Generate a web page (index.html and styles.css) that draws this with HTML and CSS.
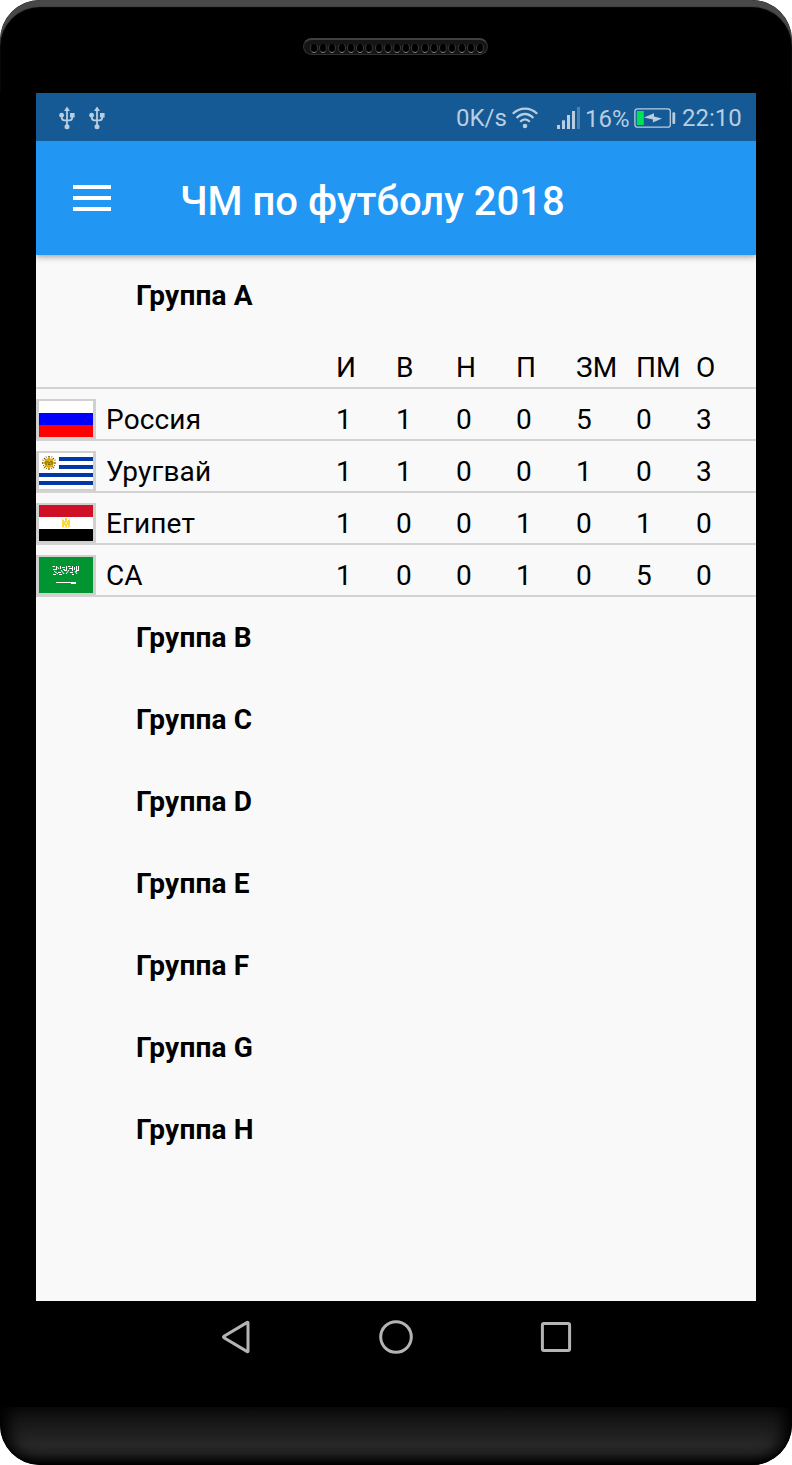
FILE: index.html
```html
<!DOCTYPE html>
<html lang="ru">
<head>
    <meta charset="UTF-8">
    <meta name="viewport" content="width=device-width, initial-scale=1.0">
    <title>ЧМ по футболу 2018</title>
    <link rel="stylesheet" href="styles.css">
</head>
<body>
    <div class="phone">
        <div class="phone-top">
            <div class="speaker">
                <i></i><i></i><i></i><i></i><i></i><i></i><i></i><i></i><i></i><i></i><i></i><i></i><i></i><i></i><i></i><i></i><i></i><i></i><i></i>
            </div>
        </div>

        <div class="screen">
            <div class="status-bar">
                <svg class="usb" width="16" height="24" viewBox="0 0 16 24">
                    <path d="M8 3V21M2.7 8.5V11Q2.7 14.3 5.5 14.3H10.5Q13.3 14.3 13.3 11V8" fill="none" stroke="currentColor" stroke-width="1.8"/>
                    <path d="M8 0.6L11 5H5Z" fill="currentColor"/>
                    <circle cx="2.6" cy="9.2" r="2.4" fill="currentColor"/>
                    <rect x="11" y="7" width="4.6" height="4.6" rx=".5" fill="currentColor"/>
                    <circle cx="8" cy="20.8" r="2.5" fill="currentColor"/>
                </svg>
                <svg class="usb" width="16" height="24" viewBox="0 0 16 24">
                    <path d="M8 3V21M2.7 8.5V11Q2.7 14.3 5.5 14.3H10.5Q13.3 14.3 13.3 11V8" fill="none" stroke="currentColor" stroke-width="1.8"/>
                    <path d="M8 0.6L11 5H5Z" fill="currentColor"/>
                    <circle cx="2.6" cy="9.2" r="2.4" fill="currentColor"/>
                    <rect x="11" y="7" width="4.6" height="4.6" rx=".5" fill="currentColor"/>
                    <circle cx="8" cy="20.8" r="2.5" fill="currentColor"/>
                </svg>
                <span class="speed">0K/s</span>
                <svg class="wifi" width="26" height="22" viewBox="0 0 26 22">
                    <g fill="none" stroke="currentColor" stroke-width="2.3">
                        <path d="M0.8 6.8Q6 1.6 13 1.6T25.2 6.8"/>
                        <path d="M4.6 11Q8.5 7 13 7T21.4 11"/>
                        <path d="M8.2 14.8Q10.5 12.3 13 12.3T17.8 14.8"/>
                    </g>
                    <circle cx="13" cy="19" r="2.3" fill="currentColor"/>
                </svg>
                <svg class="signal" width="23" height="22" viewBox="0 0 23 22">
                    <g fill="currentColor">
                        <rect x="0" y="18" width="3" height="4"/>
                        <rect x="5" y="13.3" width="3" height="8.7"/>
                        <rect x="10" y="8" width="3" height="14"/>
                        <rect x="15" y="4" width="3" height="18"/>
                        <rect x="20" y="0" width="3" height="22" opacity=".35"/>
                    </g>
                </svg>
                <span class="percent">16%</span>
                <svg class="battery" width="42" height="20" viewBox="0 0 42 20">
                    <rect x="0.9" y="0.8" width="35.4" height="18.4" rx="2.5" fill="none" stroke="currentColor" stroke-width="1.3"/>
                    <rect x="2.8" y="3" width="7" height="14" fill="#00e05a"/>
                    <path d="M10 9.6L20 5.3L20 8.4L28 10.4L18.8 14.6L19 11.4Z" fill="currentColor"/>
                    <rect x="38.4" y="4.2" width="2.8" height="11.8" rx="1" fill="currentColor"/>
                </svg>
                <span class="time">22:10</span>
            </div>

            <div class="toolbar">
                <div class="menu-btn"><span></span><span></span><span></span></div>
                <h1>ЧМ по футболу 2018</h1>
            </div>

            <div class="content">
                <h2 class="group">Группа A</h2>
                <div class="row">
                    <div></div><div></div>
                    <div>И</div><div>В</div><div>Н</div><div>П</div><div>ЗМ</div><div>ПМ</div><div>О</div>
                </div>
                <div class="row">
                    <div class="flag">
                        <svg width="54" height="36" viewBox="0 0 54 36">
                            <rect width="54" height="12" fill="#fff"/>
                            <rect y="12" width="54" height="12" fill="#00f"/>
                            <rect y="24" width="54" height="12" fill="#f00"/>
                        </svg>
                    </div>
                    <div class="team">Россия</div>
                    <div>1</div><div>1</div><div>0</div><div>0</div><div>5</div><div>0</div><div>3</div>
                </div>
                <div class="row">
                    <div class="flag">
                        <svg width="54" height="36" viewBox="0 0 54 36">
                            <rect width="54" height="36" fill="#fff"/>
                            <path d="M20 4H54V8H20ZM20 12H54V16H20ZM0 20H54V24H0ZM0 28H54V32H0Z" fill="#0038a8"/>
                            <path d="M10 3V17M3 10H17M5 5L15 15M15 5L5 15" stroke="#d9a300" stroke-width="1.5"/>
                            <path d="M10 3V17M3 10H17M5 5L15 15M15 5L5 15M7 3.5L13 16.5M13 3.5L7 16.5M3.5 7L16.5 13M16.5 7L3.5 13" stroke="#4a3800" stroke-width="1" stroke-dasharray="1 1.5"/>
                            <circle cx="10" cy="10" r="4.5" fill="#dcae08"/>
                            <path d="M8 9H9.5M11 9H12.5M9 11.5H11.5M10 9V11M7 8V12M13 8V12" stroke="#6b5000" stroke-width=".8"/>
                        </svg>
                    </div>
                    <div class="team">Уругвай</div>
                    <div>1</div><div>1</div><div>0</div><div>0</div><div>1</div><div>0</div><div>3</div>
                </div>
                <div class="row">
                    <div class="flag">
                        <svg width="54" height="36" viewBox="0 0 54 36">
                            <rect width="54" height="12" fill="#ce1126"/>
                            <rect y="12" width="54" height="12" fill="#fff"/>
                            <rect y="24" width="54" height="12" fill="#000"/>
                            <path d="M23 14H24V15H25V16H26V13H28V16H29V15H30V14H31V22H29V20H28V22H26V20H25V22H23Z" fill="#fad53c"/>
                            <path d="M26 17H28V19H26ZM24 22H30V23H24Z" fill="#fbe9a0"/>
                        </svg>
                    </div>
                    <div class="team">Египет</div>
                    <div>1</div><div>0</div><div>0</div><div>1</div><div>0</div><div>1</div><div>0</div>
                </div>
                <div class="row">
                    <div class="flag">
                        <svg width="54" height="36" viewBox="0 0 54 36">
                            <rect width="54" height="36" fill="#009530"/>
                            <g fill="none" stroke="#fff" stroke-width="1">
                                <path d="M13.5 9.5H16M17.5 9V13M18.5 10L20 12M21.5 9V12M23 10.5H26M27.5 9V13M29 9.5H31.5M33.5 9V14M35.5 10V13M37.5 9V15M39.5 9V14"/>
                                <path d="M14 12.5H17M15 14L19 17M19 15.5H22M22 13L25 17M25 13.5H28M27 17L30 13M31 15.5H34M33 17.5H35M36 14L38 17M14 17.5H17M20 17.5H23M38 13.5H40M24 12.5H26M30 11.5H33"/>
                                <path d="M17 25.5H37M32 26.5H37"/>
                            </g>
                        </svg>
                    </div>
                    <div class="team">СА</div>
                    <div>1</div><div>0</div><div>0</div><div>1</div><div>0</div><div>5</div><div>0</div>
                </div>
                <h2 class="group">Группа B</h2>
                <h2 class="group">Группа C</h2>
                <h2 class="group">Группа D</h2>
                <h2 class="group">Группа E</h2>
                <h2 class="group">Группа F</h2>
                <h2 class="group">Группа G</h2>
                <h2 class="group">Группа H</h2>
            </div>
        </div>

        <div class="nav-bar">
            <svg width="36" height="36" viewBox="0 0 36 36"><path d="M30 3.7V32.3Q30 33 29.3 32.6L6 18.7Q5 18 6 17.3L29.3 3.4Q30 3 30 3.7Z"/></svg>
            <svg width="36" height="36" viewBox="0 0 36 36"><circle cx="18" cy="18" r="15.3"/></svg>
            <svg width="36" height="36" viewBox="0 0 36 36"><rect x="4.4" y="4.4" width="27.2" height="27.2" rx="1.5"/></svg>
        </div>

        <div class="phone-bottom"></div>
    </div>
</body>
</html>
```

FILE: styles.css
```css
* {
    margin: 0;
    padding: 0;
    box-sizing: border-box;
}

body {
    font-family: Roboto, sans-serif;
    background: #fff;
}

svg {
    display: block;
    flex-shrink: 0;
}

.phone {
    display: flex;
    flex-direction: column;
    width: 792px;
    height: 1465px;
    background: #000;
    border-radius: 40px;
    overflow: hidden;
}

.phone-top {
    height: 93px;
    padding-top: 38px;
    border-radius: 40px 40px 0 0;
    box-shadow: inset 0 7px 1px #484848;
}

.speaker {
    display: flex;
    align-items: center;
    justify-content: space-between;
    width: 185px;
    height: 17px;
    margin: 0 auto 0 303px;
    padding: 1px 3px 0 6px;
    border: 1px solid #303030;
    border-top: 2px solid #404040;
    border-radius: 9px;
    background: #151515;
}

.speaker i {
    width: 8px;
    height: 10px;
    border-radius: 50%;
    background: #000;
    border: 1px solid #383838;
    border-top-color: #1c1c1c;
    border-bottom-color: #8a8a8a;
}

.screen {
    width: 720px;
    height: 1208px;
    margin: 0 36px;
    background: #f9f9f9;
}

.status-bar {
    display: flex;
    align-items: center;
    height: 48px;
    padding: 2px 0 0 23px;
    background: #155a94;
    color: #b9cde0;
    font-size: 24px;
    white-space: nowrap;
}

.status-bar span {
    flex-shrink: 0;
}

.usb {
    margin-right: 14px;
}

.speed {
    width: 56px;
    margin-left: 337px;
}

.wifi {
    margin-right: 19px;
}

.signal {
    margin-right: 5px;
}

.percent {
    width: 49px;
    padding-top: 1px;
}

.battery {
    margin-right: 6px;
}

.toolbar {
    position: relative;
    display: flex;
    align-items: center;
    height: 114px;
    padding-left: 37px;
    background: #2196f3;
    color: #fff;
    box-shadow: 0 2px 6px rgba(0, 0, 0, 0.35);
    clip-path: inset(0 0 -10px 0);
}

.menu-btn {
    display: flex;
    flex-direction: column;
    gap: 7px;
    width: 38px;
    margin-right: 69px;
}

.menu-btn span {
    height: 4px;
    background: #fff;
}

.toolbar h1 {
    padding-top: 6px;
    font-size: 40px;
    font-weight: 500;
}

.group {
    height: 82px;
    padding-left: 100px;
    font-size: 28px;
    font-weight: 700;
    line-height: 82px;
    letter-spacing: 0.2px;
}

.row {
    display: grid;
    grid-template-columns: 70px 230px repeat(7, 60px);
    height: 52px;
    border-bottom: 2px solid #d3d3d3;
    font-size: 28px;
    line-height: 61px;
}

.team {
    letter-spacing: 0.15px;
}

.flag {
    width: 60px;
    height: 40px;
    margin-top: 10px;
    padding: 2px 3px;
    background: #d0d0d0;
}

.nav-bar {
    display: flex;
    justify-content: center;
    gap: 124px;
    height: 106px;
    padding-top: 18px;
    fill: none;
    stroke: #b4b4b4;
    stroke-width: 3;
}

.phone-bottom {
    height: 58px;
    border-radius: 0 0 40px 40px;
    background: linear-gradient(#0c0c0c, #272727 65%, #202020 80%, #000);
    box-shadow: inset 14px 0 14px -6px #000, inset -14px 0 14px -6px #000;
}
```
